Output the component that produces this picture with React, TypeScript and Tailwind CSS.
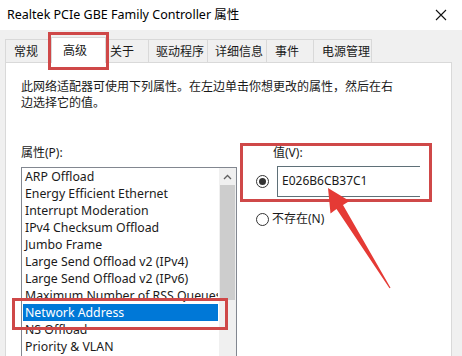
import React from "react";

const items = [
  "ARP Offload",
  "Energy Efficient Ethernet",
  "Interrupt Moderation",
  "IPv4 Checksum Offload",
  "Jumbo Frame",
  "Large Send Offload v2 (IPv4)",
  "Large Send Offload v2 (IPv6)",
  "Maximum Number of RSS Queues",
  "Network Address",
  "NS Offload",
  "Priority & VLAN",
];

const tabs = [
  { label: "常规", w: "w-[46px]", pl: "pl-[8px]" },
  { label: "高级", w: "w-[55px]", pl: "pl-[11px]", selected: true },
  { label: "关于", w: "w-[44px]", pl: "pl-[4px]" },
  { label: "驱动程序", w: "w-[60px]", pl: "pl-[7px]" },
  { label: "详细信息", w: "w-[60px]", pl: "pl-[7px]" },
  { label: "事件", w: "w-[48px]", pl: "pl-[8px]" },
  { label: "电源管理", w: "w-[59px]", pl: "pl-[8px]" },
];

function Radio({ checked }: { checked?: boolean }) {
  return (
    <div className="w-[13px] h-[13px] rounded-full border border-[#333333] bg-white flex items-center justify-center shrink-0">
      {checked && <div className="w-[7px] h-[7px] rounded-full bg-[#333333]" />}
    </div>
  );
}

export default function App() {
  return (
    <div className="relative w-[462px] h-[356px] overflow-hidden bg-[#f0f0f0] text-[#1a1a1a] font-['Noto_Sans','Noto_Sans_CJK_SC',sans-serif]">
      {/* Title bar */}
      <div className="h-[30px] bg-white flex items-center justify-between pl-[7px] pr-[10px]">
        <span className="text-[12.5px] leading-[16px] text-black">Realtek PCIe GBE Family Controller 属性</span>
        <svg width="12" height="12" viewBox="0 0 12 12" className="mr-[5px]">
          <path d="M1 1 L11 11 M11 1 L1 11" stroke="#111" strokeWidth="1.1" fill="none" />
        </svg>
      </div>

      <div className="pl-[5px] pr-[10px] pt-[7px]">
        {/* Tabs */}
        <div className="flex items-end h-[25px] relative z-10">
          {tabs.map((t) =>
            t.selected ? (
              <div
                key={t.label}
                className={`${t.w} ${t.pl} h-[26px] -mb-px bg-white border border-b-0 border-[#d9d9d9] flex items-center text-[12px] leading-[16px]`}
              >
                {t.label}
              </div>
            ) : (
              <div
                key={t.label}
                className={`${t.w} ${t.pl} h-[23px] bg-[#f0f0f0] border border-b-0 border-[#d9d9d9] -ml-px first:ml-0 flex items-center text-[12px] leading-[16px] pt-[2px]`}
              >
                {t.label}
              </div>
            )
          )}
        </div>

        {/* Panel */}
        <div className="bg-white border border-b-0 border-[#d9d9d9] h-[300px] pl-[15px] pt-[16px]">
          <div className="text-[12px] leading-[16px] whitespace-nowrap">
            <div>此网络适配器可使用下列属性。在左边单击你想更改的属性，然后在右</div>
            <div>边选择它的值。</div>
          </div>

          <div className="flex items-start mt-[32px]">
            {/* Left column */}
            <div className="pt-[2px] w-[216px]">
              <div className="text-[12px] leading-[16px] h-[16px]">属性(P):</div>
              <div className="mt-[6px] w-[216px] h-[200px] border border-[#828790] flex">
                <div className="flex-1 px-px overflow-hidden">
                  {items.map((it) => {
                    const sel = it === "Network Address";
                    return (
                      <div
                        key={it}
                        className={`h-[17px] leading-[17px] pl-[2px] text-[12.3px] whitespace-nowrap overflow-hidden ${
                          sel ? "bg-[#0078d7] text-white" : ""
                        }`}
                      >
                        {it}
                      </div>
                    );
                  })}
                </div>
                <div className="w-[17px] bg-[#f0f0f0] flex flex-col">
                  <div className="h-[17px] flex items-center justify-center">
                    <svg width="9" height="6" viewBox="0 0 9 6">
                      <path d="M1 5 L4.5 1.5 L8 5" stroke="#606060" strokeWidth="1.3" fill="none" />
                    </svg>
                  </div>
                  <div className="mx-[1px] h-[115px] bg-[#cdcdcd]" />
                </div>
              </div>
            </div>

            {/* Right column */}
            <div className="ml-[3px] w-[192px]">
              <div className="h-[59px] pt-[3px]">
                <div className="pl-[33px] text-[12px] leading-[14px] h-[14px]">值(V):</div>
                <div className="flex items-center mt-[6px] pl-[16px]">
                  <Radio checked />
                  <div className="ml-[8px] w-[143px] h-[31px] border border-r-0 border-[#5f7078] flex items-center pl-[4px] text-[12px] pb-[2px]">
                    E026B6CB37C1
                  </div>
                </div>
              </div>
              <div className="flex items-center mt-[9px] pl-[16px] h-[16px]">
                <Radio />
                <span className="ml-[3px] text-[12px] leading-[16px]">不存在(N)</span>
              </div>
            </div>
          </div>
        </div>
      </div>

      {/* Annotation boxes */}
      <div className="absolute left-[48px] top-[32px] w-[61px] h-[38px] border-[3px] border-[#cf4848] z-20" />
      <div className="absolute left-[240px] top-[143px] w-[192px] h-[59px] border-[3px] border-[#cf4848] z-20" />
      <div className="absolute left-[12px] top-[298px] w-[216px] h-[32px] border-[3px] border-[#cf4848] z-20" />

      {/* Arrow */}
      <svg className="absolute left-0 top-0 z-30" width="462" height="356" viewBox="0 0 462 356">
        <polygon
          points="328,188 349.5,201 343,205 390.5,287.7 389.5,288.3 336.5,209 330.5,213.5"
          fill="#e53a35"
        />
      </svg>
    </div>
  );
}
